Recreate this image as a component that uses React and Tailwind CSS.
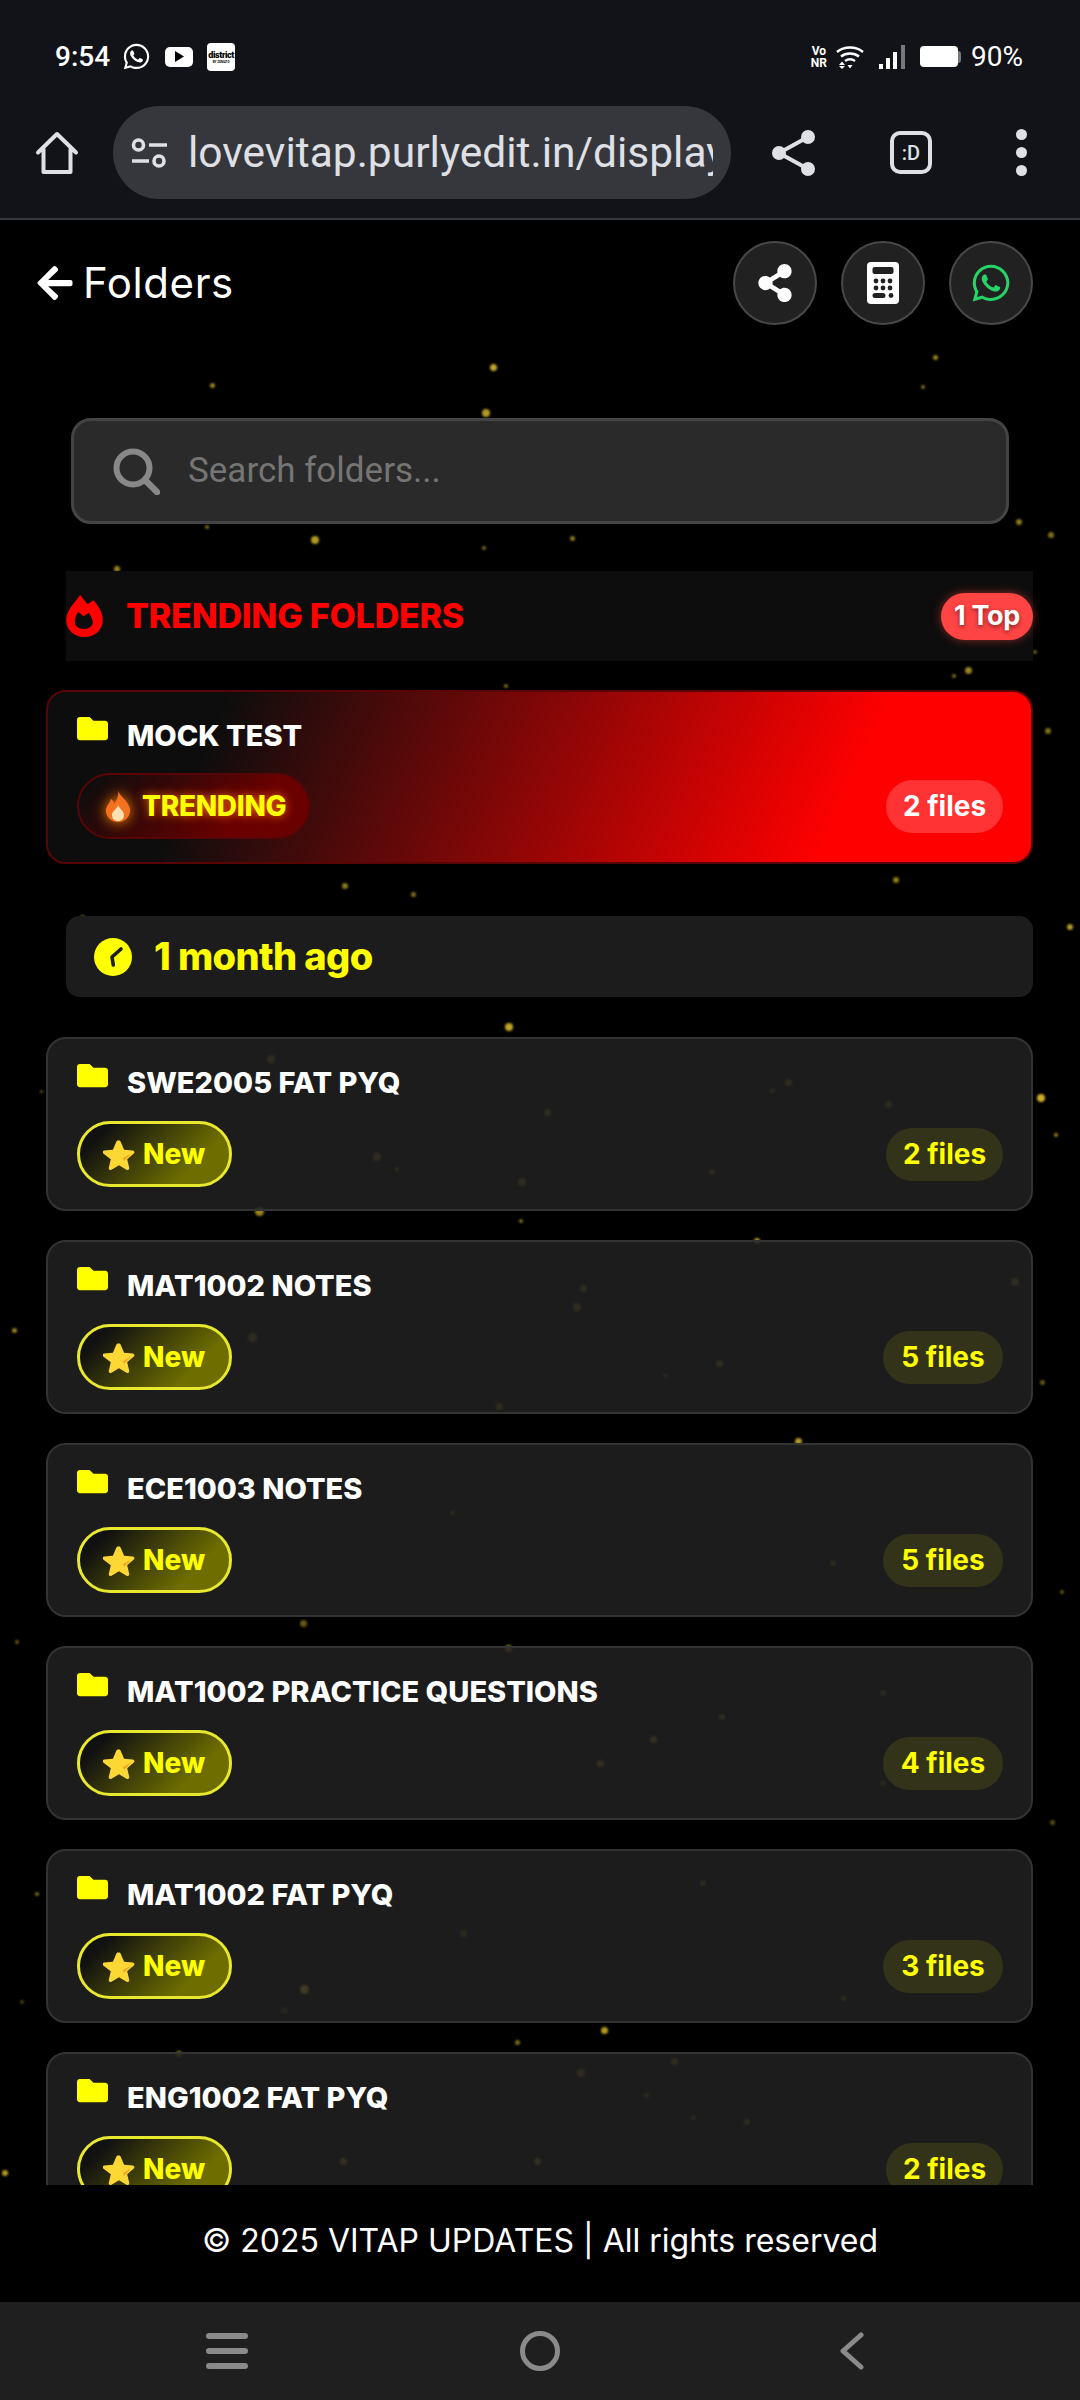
import React from "react";
import { FaFolder, FaShareAlt, FaWhatsapp, FaArrowLeft } from "react-icons/fa";

const dots = [
  [490,364,7,.75],[482,409,8,.7],[210,383,5,.6],[933,355,5,.6],[921,385,4,.5],[311,536,8,.7],[570,536,5,.55],[482,546,4,.5],[1016,519,6,.55],[1048,532,6,.5],[114,566,6,.6],[205,525,4,.5],[965,667,7,.6],[952,674,4,.5],[504,684,4,.5],[1045,728,6,.5],[1033,650,4,.45],[893,877,6,.55],[342,883,6,.55],[411,892,5,.5],[80,915,5,.45],[1067,924,6,.7],[505,1023,8,.75],[1037,1094,8,.8],[1054,1133,4,.6],[40,1090,3,.4],[519,1219,4,.5],[754,1238,6,.7],[12,1328,5,.6],[795,1438,7,.7],
  [267,1055,8,.5],[785,1079,7,.5],[770,1088,5,.4],[885,1101,7,.45],[544,1109,7,.5],[373,1153,8,.5],[709,1169,6,.4],[518,1178,8,.5],[255,1207,9,.6],[395,1167,4,.5],[580,1285,7,.5],[573,1303,8,.5],[1011,1278,8,.5],[248,1333,9,.5],[716,1360,7,.5],[496,1403,7,.5],[663,1373,5,.35],
  [650,1736,7,.6],[719,1714,6,.5],[597,1760,7,.6],[505,1645,7,.6],[830,1560,6,.4],[300,1620,7,.4],[880,1690,6,.4],[450,1510,5,.4],[210,1760,6,.35],[700,1880,6,.4],[300,1985,9,.9],[460,1930,7,.4],[880,1780,6,.35],
  [671,2058,7,.5],[577,2069,8,.5],[644,2093,5,.4],[691,2115,5,.4],[744,2119,6,.5],[340,2158,7,.6],[534,2158,7,.6],
  [176,2051,6,.6],[515,2040,5,.5],[2,2170,6,.7],[601,2027,7,.7],[35,1892,4,.5],[841,1996,5,.5],[281,2007,7,.25],[1040,1380,5,.4],[1060,1590,4,.4],[15,1640,4,.4],[1050,1820,5,.35],[20,2000,4,.3],
];

const F = "[font-family:Inter,sans-serif]";

function Tune() {
  return (
    <svg width="36" height="32" viewBox="0 0 36 32" fill="none" stroke="#dfe0e5" strokeWidth="3.6">
      <circle cx="7.5" cy="8" r="5" />
      <path d="M18 8h18M1 24h17" />
      <circle cx="28" cy="24" r="5" />
    </svg>
  );
}

function FireIcon() {
  return (
    <svg width="37" height="42" viewBox="0 0 110 126" className="shrink-0">
      <path
        fillRule="evenodd"
        fill="#f00"
        d="M42 0C50 10 58 20 64 28L82 16C98 34 110 55 110 74C110 104 86 126 55 126C24 126 0 104 0 74C0 48 26 22 42 0ZM36 50L52 64L68 54C76 66 80 74 80 82C80 94 68 102 54 102C38 102 26 94 26 82C26 70 30 60 36 50Z"
      />
    </svg>
  );
}

function ClockIcon() {
  return (
    <svg width="38" height="38" viewBox="0 0 38 38" className="shrink-0">
      <circle cx="19" cy="19" r="19" fill="#ff0" />
      <path d="M19.300 27L18 19L27 11" fill="none" stroke="#1c1c1c" strokeWidth="3.600" strokeLinecap="round" strokeLinejoin="round" />
    </svg>
  );
}

function CalcIcon() {
  const cx = [9, 16, 23];
  return (
    <svg width="32" height="42" viewBox="0 0 32 42">
      <rect width="32" height="42" rx="4" fill="#fff" />
      <rect x="5.500" y="5" width="21" height="7" rx="2" fill="#212121" />
      {[19, 26].map((y) => cx.map((x) => <circle key={`${x}${y}`} cx={x} cy={y} r="2.400" fill="#212121" />))}
      <rect x="5.500" y="31" width="13" height="5" rx="2.500" fill="#212121" />
      <circle cx="24" cy="33.500" r="2.400" fill="#212121" />
    </svg>
  );
}

function SearchIcon() {
  return (
    <svg width="47" height="47" viewBox="0 0 47 47" fill="none" stroke="#888" strokeWidth="6" strokeLinecap="round" className="shrink-0">
      <circle cx="20" cy="20" r="16.500" />
      <path d="M32 32L44 44" strokeWidth="6.500" />
    </svg>
  );
}

function FlameEmoji() {
  return (
    <svg width="26" height="32" viewBox="0 0 26 32" className="drop-shadow-[0_0_7px_#ff8c00] shrink-0">
      <path d="M13 0c1 6 10 10 12 19 1 7-5 13-12 13S0 26 1 19c1-4 4-6 5-10 2 1 3 3 3 5 3-4 5-9 4-14z" fill="#f4711f" />
      <path d="M13 15c1 3 6 6 6 10 0 4-3 6-6 6s-6-2-6-6c0-4 5-6 6-10z" fill="#ffe0b0" />
    </svg>
  );
}

function StarEmoji() {
  return (
    <svg width="32" height="31" viewBox="0 0 32 31" className="shrink-0">
      <path d="M16 1.500c.8 0 1.400.5 1.700 1.200l3.400 8 8.700.7c1.600.2 2.200 2.100 1 3.100l-6.600 5.700 2 8.500c.4 1.600-1.300 2.800-2.700 2l-7.500-4.500-7.500 4.500c-1.400.8-3.100-.4-2.700-2l2-8.500L.200 14.500c-1.200-1-.6-2.900 1-3.100l8.700-.7 3.400-8c.3-.7 1-1.200 1.700-1.200z" fill="#fdd835" />
      <path d="M27 15l-7 4 1 3 5.500-5.500z" fill="#f4a625" />
    </svg>
  );
}

function FolderCard({ name, count, wideCount }) {
  return (
    <div className="h-[174px] rounded-[20px] border-2 border-[#333] bg-[#212121]/85 pl-[29px] pr-[28px] pt-[21px] shrink-0">
      <div className="flex items-start h-[61px]">
        <FaFolder className="text-[#ff0] text-[31px] shrink-0" />
        <span className={`${F} ml-[19px] mt-[6px] text-[29px] leading-[34px] font-extrabold text-white whitespace-nowrap`}>{name}</span>
      </div>
      <div className="flex items-center justify-between">
        <div className="h-[66px] w-[155px] rounded-full border-[3px] border-[#e8e82e] bg-[linear-gradient(135deg,#111_15%,#6e6e00_75%)] flex items-center pl-[23px] gap-[8px]">
          <StarEmoji />
          <span className={`${F} text-[28px] font-extrabold text-[#ff0]`}>New</span>
        </div>
        <div className={`h-[53px] ${wideCount ? "w-[120px]" : "w-[117px]"} rounded-full bg-[#33331a] flex items-center justify-center`}>
          <span className={`${F} text-[28px] font-bold text-[#ff0] whitespace-nowrap`}>{count}</span>
        </div>
      </div>
    </div>
  );
}

export default function App() {
  return (
    <div className="w-[1080px] h-[2400px] flex flex-col bg-black overflow-hidden">
      <div className="h-[220px] shrink-0 bg-[#121318] border-b-2 border-[#36373c] flex flex-col">
        <div className="h-[106px] flex items-center justify-between pl-[55px] pr-[57px] pt-[7px] [font-family:Roboto,sans-serif] text-white">
          <div className="flex items-center">
            <span className="text-[28px] font-medium">9:54</span>
            <span className="ml-[12px] flex"><FaWhatsapp className="text-white text-[29px]" /></span>
            <div className="ml-[14px] w-[28px] h-[20px] rounded-[5px] bg-white flex items-center justify-center">
              <svg width="9" height="11" viewBox="0 0 9 11"><path d="M0 0l9 5.500-9 5.500z" fill="#000" /></svg>
            </div>
            <div className="ml-[14px] w-[28px] h-[28px] rounded-[4px] bg-white flex flex-col items-center justify-center text-black">
              <span className="text-[9px] leading-[10px] font-black tracking-[-0.4px]">district</span>
              <span className="text-[3px] leading-[4px] font-bold">BY ZOMATO</span>
            </div>
          </div>
          <div className="flex items-center">
            <div className="flex flex-col items-center text-[12px] leading-[12px] font-bold">
              <span>Vo</span><span>NR</span>
            </div>
            <svg className="ml-[9px]" width="28" height="24" viewBox="0 0 28 24" fill="none" stroke="#fff" strokeWidth="2.400">
              <path d="M1 7c7-6 19-6 26 0M5 11.500c5-4 13-4 18 0M9 16c3-2 7-2 10 0" />
              <path d="M3 20l3-3.500L9 20zM3 21h6l-3 3zM11.500 20h5l-2.500 3.500z" fill="#fff" stroke="none" />
            </svg>
            <svg className="ml-[15px]" width="26" height="24" viewBox="0 0 26 24">
              <rect x="0" y="19" width="4" height="5" fill="#fff" />
              <rect x="7" y="13" width="4" height="11" fill="#fff" />
              <rect x="14" y="7" width="4" height="17" fill="#fff" />
              <rect x="22" y="0" width="4" height="24" fill="#77777c" />
            </svg>
            <div className="ml-[15px] flex items-center">
              <div className="w-[38px] h-[21px] rounded-[4px] bg-white" />
              <div className="w-[3px] h-[12px] rounded-r-[3px] bg-[#77777c]" />
            </div>
            <span className="ml-[10px] text-[28px]">90%</span>
          </div>
        </div>
        <div className="flex items-center h-[93px]">
          <svg className="ml-[35px] shrink-0" width="44" height="44" viewBox="0 0 44 44" fill="none" stroke="#dfe0e5" strokeWidth="4" strokeLinejoin="round" strokeLinecap="round">
            <path d="M3 21.500L22 3l19 18.500M8.500 18v23h27V18" />
          </svg>
          <div className="ml-[34px] w-[618px] h-[93px] rounded-full bg-[#36373c] flex items-center pl-[18px] shrink-0">
            <Tune />
            <div className="ml-[21px] w-[525px] overflow-hidden whitespace-nowrap [font-family:Roboto,sans-serif] text-[42.5px] text-[#dfe0e5]">
              lovevitap.purlyedit.in/display
            </div>
          </div>
          <svg className="ml-[40px] shrink-0" width="46" height="48" viewBox="0 0 46 48" fill="#dfe0e5" stroke="#dfe0e5" strokeWidth="4">
            <path d="M37 8L8 24l29 16" fill="none" />
            <circle cx="37" cy="8" r="5" /><circle cx="8" cy="24" r="5" /><circle cx="37" cy="40" r="5" />
          </svg>
          <div className="ml-[73px] w-[42px] h-[43px] rounded-[10px] border-[4px] border-[#dfe0e5] flex items-center justify-center shrink-0">
            <span className="[font-family:Roboto,sans-serif] text-[20px] font-medium text-[#dfe0e5]">:D</span>
          </div>
          <div className="ml-[84px] flex flex-col gap-[7px] shrink-0">
            <div className="w-[11px] h-[11px] rounded-full bg-[#dfe0e5]" />
            <div className="w-[11px] h-[11px] rounded-full bg-[#dfe0e5]" />
            <div className="w-[11px] h-[11px] rounded-full bg-[#dfe0e5]" />
          </div>
        </div>
      </div>

      <div className="flex-1 relative overflow-hidden">
        {dots.map(([x, y, s, o], i) => (
          <div
            key={i}
            className="absolute rounded-full bg-[#ffdc32] blur-[1px]"
            style={{ left: x, top: y - 220, width: s, height: s, opacity: o }}
          />
        ))}
        <div className="relative flex flex-col">
          <div className="h-[84px] mt-[21px] flex items-center justify-between pl-[35px] pr-[47px]">
            <div className="flex items-center text-white">
              <FaArrowLeft className="text-[40px]" />
              <span className={`${F} ml-[8px] -mt-[2px] text-[42px] tracking-[0.6px]`}>Folders</span>
            </div>
            <div className="flex gap-[24px]">
              <div className="w-[84px] h-[84px] rounded-full bg-[#212121] border-2 border-[#484848] flex items-center justify-center">
                <FaShareAlt className="text-white text-[38px]" />
              </div>
              <div className="w-[84px] h-[84px] rounded-full bg-[#212121] border-2 border-[#484848] flex items-center justify-center">
                <CalcIcon />
              </div>
              <div className="w-[84px] h-[84px] rounded-full bg-[#212121] border-2 border-[#484848] flex items-center justify-center">
                <FaWhatsapp className="text-[#25d366] text-[42px]" />
              </div>
            </div>
          </div>

          <div className="mt-[93px] ml-[71px] w-[938px] h-[106px] rounded-[20px] bg-[#2a2a2a] border-[3px] border-[#444] flex items-center pl-[39px]">
            <SearchIcon />
            <span className="[font-family:Roboto,sans-serif] ml-[28px] text-[35px] text-[#757575]">Search folders...</span>
          </div>

          <div className="mt-[47px] ml-[66px] mr-[47px] h-[90px] bg-[#0d0d0d] flex items-center justify-between">
            <div className="flex items-center">
              <FireIcon />
              <span className={`${F} ml-[23px] -mt-[2px] text-[34px] font-extrabold text-[#f00] tracking-[-0.2px] whitespace-nowrap`}>TRENDING FOLDERS</span>
            </div>
            <div className="h-[47px] w-[92px] rounded-full bg-[#ff4444] shadow-[0_0_10px_rgba(255,68,68,0.5)] flex items-center justify-center">
              <span className={`${F} text-[27px] font-bold text-white [text-shadow:0_2px_4px_rgba(0,0,0,0.5)] tracking-[-0.3px] whitespace-nowrap`}>1 Top</span>
            </div>
          </div>

          <div className="mt-[29px] ml-[46px] mr-[47px] flex flex-col">
            <div className="h-[174px] rounded-[20px] border-2 border-[#5a0505] bg-[linear-gradient(115deg,#0d0d0d_17%,#ff0000_80%)] pl-[29px] pr-[28px] pt-[21px]">
              <div className="flex items-start h-[60px]">
                <FaFolder className="text-[#ff0] text-[31px] shrink-0" />
                <span className={`${F} ml-[19px] mt-[6px] text-[29px] leading-[34px] font-extrabold text-white`}>MOCK TEST</span>
              </div>
              <div className="flex items-center justify-between">
                <div className="h-[66px] w-[233px] rounded-full border-2 border-[#5a0505] bg-[linear-gradient(135deg,#0d0d0d_5%,#6a0000_70%)] flex items-center pl-[26px] gap-[11px]">
                  <FlameEmoji />
                  <span className={`${F} text-[28px] font-extrabold text-[#ff0] tracking-[-0.3px] [text-shadow:0_0_10px_#ff6a00]`}>TRENDING</span>
                </div>
                <div className="h-[53px] w-[117px] rounded-full bg-[#ff3333] flex items-center justify-center">
                  <span className={`${F} text-[28px] font-bold text-white whitespace-nowrap`}>2 files</span>
                </div>
              </div>
            </div>
          </div>

          <div className="mt-[52px] ml-[66px] mr-[47px] h-[81px] rounded-[14px] bg-[#1c1c1c] flex items-center pl-[28px]">
            <ClockIcon />
            <span className={`${F} ml-[22px] text-[38px] font-extrabold text-[#ff0] tracking-[-0.6px]`}>1 month ago</span>
          </div>

          <div className="mt-[40px] ml-[46px] mr-[47px] flex flex-col gap-[29px]">
            <FolderCard name="SWE2005 FAT PYQ" count="2 files" />
            <FolderCard name="MAT1002 NOTES" count="5 files" wideCount />
            <FolderCard name="ECE1003 NOTES" count="5 files" wideCount />
            <FolderCard name="MAT1002 PRACTICE QUESTIONS" count="4 files" wideCount />
            <FolderCard name="MAT1002 FAT PYQ" count="3 files" wideCount />
            <FolderCard name="ENG1002 FAT PYQ" count="2 files" />
          </div>
        </div>
      </div>

      <div className="h-[117px] shrink-0 bg-black flex items-center justify-center pb-[5px]">
        <span className={`${F} text-[32px] text-white whitespace-nowrap`}>© 2025 VITAP UPDATES | All rights reserved</span>
      </div>

      <div className="h-[98px] shrink-0 bg-[#1f1f1f] flex items-center pl-[206px]">
        <div className="flex flex-col gap-[9px]">
          <div className="w-[42px] h-[6px] rounded-full bg-[#8a8a8a]" />
          <div className="w-[42px] h-[6px] rounded-full bg-[#8a8a8a]" />
          <div className="w-[42px] h-[6px] rounded-full bg-[#8a8a8a]" />
        </div>
        <div className="ml-[272px] w-[40px] h-[40px] rounded-full border-[5px] border-[#8a8a8a]" />
        <svg className="ml-[279px]" width="25" height="38" viewBox="0 0 25 38" fill="none" stroke="#8a8a8a" strokeWidth="5" strokeLinecap="round" strokeLinejoin="round">
          <path d="M22 3L4 19l18 16" />
        </svg>
      </div>
    </div>
  );
}
